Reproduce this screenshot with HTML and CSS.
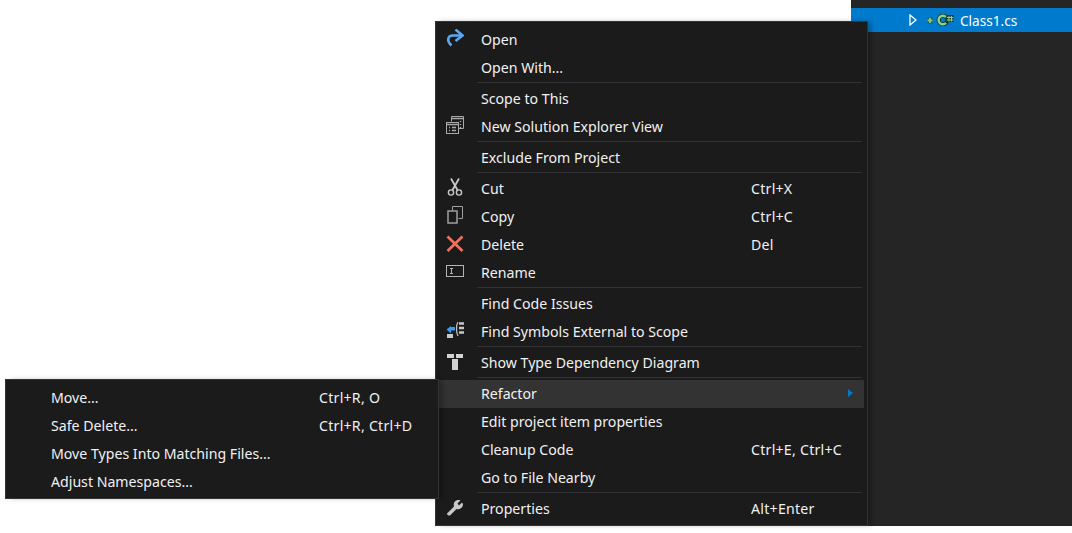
FILE: index.html
```html
<!DOCTYPE html>
<html lang="en">
<head>
    <meta charset="UTF-8">
    <title>Context Menu</title>
    <link rel="stylesheet" href="styles.css">
</head>
<body>

    <!-- Solution Explorer panel -->
    <div class="panel">
        <div class="tree-row">
            <svg class="tree-arrow" width="8" height="12" viewBox="0 0 8 12"><path d="M1 1 L7 6 L1 11 Z" fill="none" stroke="#fff" stroke-width="1.300"/></svg>
            <svg class="tree-icon" width="28" height="12" viewBox="0 0 28 12">
                <path d="M1 6.500 H7 M4 3.500 V9.500" stroke="#1f5d3a" stroke-width="3.400"/>
                <path d="M1.500 6.500 H6.500 M4 4 V9" stroke="#86c586" stroke-width="1.800"/>
                <circle cx="17" cy="6" r="4.300" fill="none" stroke="#17402a" stroke-width="4.200"/>
                <path d="M20 3 A4.300 4.300 0 1 0 20 9" fill="none" stroke="#8dd28d" stroke-width="2.400"/>
                <rect x="20.500" y="1" width="7.500" height="7" rx="1" fill="#17402a"/>
                <path d="M21 3.500 H27.500 M21 6 H27.500 M23 2 V7.500 M25.500 2 V7.500" stroke="#8dd28d" stroke-width="1"/>
            </svg>
            <span>Class1.cs</span>
        </div>
    </div>

    <!-- Main context menu -->
    <div class="menu main-menu">
        <div class="item">
            <span class="icon"><svg width="18" height="18" viewBox="0 0 18 18"><path d="M5.500 16.500 C0.500 12 1.500 6.500 7 6.500 H15" fill="none" stroke="#5aa9ef" stroke-width="2.600"/><path d="M9.500 0.500 L16.500 6.500 L9.500 12" fill="none" stroke="#5aa9ef" stroke-width="2.600"/></svg></span>
            <span class="label">Open</span>
        </div>
        <div class="item"><span class="icon"></span><span class="label">Open With...</span></div>
        <div class="sep"></div>
        <div class="item"><span class="icon"></span><span class="label">Scope to This</span></div>
        <div class="item">
            <span class="icon"><svg width="18" height="18" viewBox="0 0 18 18" fill="none" stroke="#a8a8a8"><path d="M5.500 5.500 V0.500 H17.500 V12.500 H12.500" stroke-width="1"/><path d="M6 2.500 H17 M14.500 5 V6 M14.500 8 V9 M14.500 11 V12" stroke-width="1.500"/><rect x="0.500" y="6.500" width="12" height="11"/><path d="M1 8.500 H12 M3 11.500 H4 M6 11.500 H10 M3 14.500 H4 M6 14.500 H10" stroke-width="1.500"/></svg></span>
            <span class="label">New Solution Explorer View</span>
        </div>
        <div class="sep"></div>
        <div class="item"><span class="icon"></span><span class="label">Exclude From Project</span></div>
        <div class="sep"></div>
        <div class="item">
            <span class="icon"><svg width="18" height="18" viewBox="0 0 18 18" fill="none" stroke="#c8c8c8"><path d="M5 0.500 L11.500 12 M13 0.500 L6.500 12" stroke-width="1.800"/><circle cx="5" cy="14.500" r="2.600" stroke-width="1.400"/><circle cx="13" cy="14.500" r="2.600" stroke-width="1.400"/></svg></span>
            <span class="label">Cut</span><span class="keys">Ctrl+X</span>
        </div>
        <div class="item">
            <span class="icon"><svg width="18" height="18" viewBox="0 0 18 18" fill="none" stroke="#a0a0a0"><path d="M6.500 4.500 V0.500 H16.500 V12.500 H12.500" stroke-width="1"/><rect x="2" y="5" width="9" height="12" stroke-width="1.500"/></svg></span>
            <span class="label">Copy</span><span class="keys">Ctrl+C</span>
        </div>
        <div class="item">
            <span class="icon"><svg width="18" height="18" viewBox="0 0 18 18"><path d="M1.500 2.500 L16.500 17 M16.500 2.500 L1.500 17" stroke="#f1705a" stroke-width="2.800"/></svg></span>
            <span class="label">Delete</span><span class="keys">Del</span>
        </div>
        <div class="item">
            <span class="icon"><svg width="18" height="18" viewBox="0 0 18 18" fill="none" stroke="#b4b4b4"><rect x="0.500" y="3.500" width="17" height="11"/><path d="M4 6.500 H7 M4 11.500 H7 M5.500 6.500 V11.500" stroke-width="1"/></svg></span>
            <span class="label">Rename</span>
        </div>
        <div class="sep"></div>
        <div class="item"><span class="icon"></span><span class="label">Find Code Issues</span></div>
        <div class="item">
            <span class="icon"><svg width="18" height="18" viewBox="0 0 18 18"><path d="M9 6 V9.500 H5 V12.500 L0.500 8.500 L5 5 V6 Z" fill="#3f9bea"/><rect x="1" y="13" width="6" height="4" fill="#c8c8c8"/><path d="M12 1 C10 4 10 11 12 15" fill="none" stroke="#c8c8c8" stroke-width="1.200"/><path d="M13 2.500 H18 M13 7 H18 M13 11.500 H18" stroke="#c8c8c8" stroke-width="2.500"/></svg></span>
            <span class="label">Find Symbols External to Scope</span>
        </div>
        <div class="sep"></div>
        <div class="item">
            <span class="icon"><svg width="18" height="18" viewBox="0 0 18 18" fill="#d2d2d2"><rect x="1" y="2" width="7" height="4"/><rect x="10" y="2" width="7" height="4"/><rect x="6" y="7" width="6" height="11"/></svg></span>
            <span class="label">Show Type Dependency Diagram</span>
        </div>
        <div class="sep"></div>
        <div class="item active">
            <span class="icon"></span><span class="label">Refactor</span>
            <span class="arrow"></span>
        </div>
        <div class="item"><span class="icon"></span><span class="label">Edit project item properties</span></div>
        <div class="item"><span class="icon"></span><span class="label">Cleanup Code</span><span class="keys">Ctrl+E, Ctrl+C</span></div>
        <div class="item"><span class="icon"></span><span class="label">Go to File Nearby</span></div>
        <div class="sep"></div>
        <div class="item">
            <span class="icon"><svg width="18" height="18" viewBox="0 0 18 18"><path d="M1 15.500 L8 8.500 C7 5 9 2 13 2 L14.500 2.300 L11.500 5.500 L13 7.500 L16 4.500 L17 6 C17 9.500 14 12 10.500 11 L4 17.500 C3 18 0.500 16.500 1 15.500 Z" fill="#c8c8c8"/></svg></span>
            <span class="label">Properties</span><span class="keys">Alt+Enter</span>
        </div>
    </div>

    <!-- Refactor submenu -->
    <div class="menu sub-menu">
        <div class="item"><span class="icon"></span><span class="label">Move...</span><span class="keys">Ctrl+R, O</span></div>
        <div class="item"><span class="icon"></span><span class="label">Safe Delete...</span><span class="keys">Ctrl+R, Ctrl+D</span></div>
        <div class="item"><span class="icon"></span><span class="label">Move Types Into Matching Files...</span></div>
        <div class="item"><span class="icon"></span><span class="label">Adjust Namespaces...</span></div>
    </div>

</body>
</html>
```

FILE: styles.css
```css
/* Base Styling */
body {
    font-family: 'Noto Sans', 'Open Sans', Arial, sans-serif;
    font-size: 14.15px;
    color: #f1f1f1;
    margin: 0;
    height: 533px;
    overflow: hidden;
    background-color: #fff;
    position: relative;
}

/* Solution Explorer */
.panel {
    margin-left: 851px;
    height: 526px;
    padding-top: 8px;
    box-sizing: border-box;
    background-color: #252526;
}

.tree-row {
    height: 24px;
    padding-left: 58px;
    display: flex;
    align-items: center;
    background-color: #007acc;
    color: #fff;
    font-size: 13.6px;
}

.tree-arrow {
    margin-right: 9px;
}

.tree-icon {
    margin-right: 6px;
}

/* Menus */
.menu {
    position: absolute;
    box-sizing: border-box;
    border: 1px solid #333337;
    background-color: #1b1b1c;
    padding: 4px 3px 2px 0;
    box-shadow: 4px 0 5px -1px rgba(0, 0, 0, 0.3);
}

.main-menu {
    left: 435px;
    top: 21px;
    width: 433px;
    height: 505px;
}

.sub-menu {
    left: 5px;
    top: 379px;
    width: 434px;
    height: 120px;
}

.item {
    display: grid;
    grid-template-columns: 45px 270px 1fr;
    height: 28px;
    line-height: 27px;
    position: relative;
}

.sub-menu .item {
    grid-template-columns: 45px 268px 1fr;
}

.item.active {
    background-color: #333334;
}

.icon {
    padding: 3px 0 0 10px;
    box-sizing: border-box;
}

.icon svg {
    display: block;
}

.label {
    white-space: nowrap;
}

.keys {
    white-space: nowrap;
    letter-spacing: 0.25px;
}

.sep {
    height: 1px;
    margin: 0 2px 2px 41px;
    background-color: #333337;
}

.arrow {
    position: absolute;
    left: 412px;
    top: 9px;
    border-left: 5px solid #007acc;
    border-top: 4.500px solid transparent;
    border-bottom: 4.500px solid transparent;
}
```
